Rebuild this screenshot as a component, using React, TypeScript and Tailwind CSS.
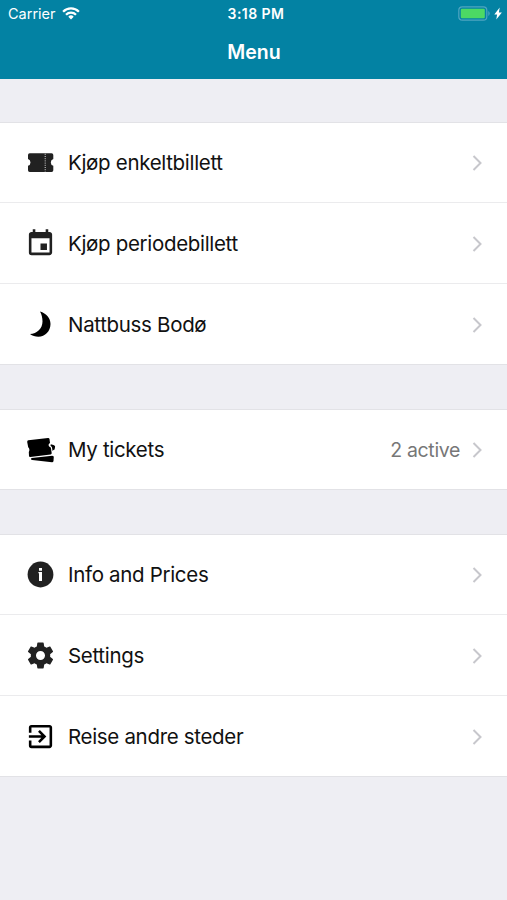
import type { ReactNode } from 'react';
import { MdEvent, MdExitToApp } from 'react-icons/md';

type MenuItem = {
  id: string;
  label: string;
  icon: ReactNode;
  detail?: string;
};

function TicketIcon() {
  return (
    <svg width="31" height="31" viewBox="0 0 31 31">
      <path
        d="M4.700 6.200h21.900a1.700 1.700 0 0 1 1.700 1.700v4.200a3.500 3.500 0 0 0 0 6.700v4.400a1.700 1.700 0 0 1-1.700 1.700H4.700A1.700 1.700 0 0 1 3 23.200v-4.400a3.500 3.500 0 0 0 0-6.700V7.900a1.700 1.700 0 0 1 1.700-1.700z"
        fill="#212121"
      />
      <path d="M20.200 6.800v18" stroke="#ddd" strokeWidth="1" strokeDasharray="1 1.200" />
    </svg>
  );
}

function MoonIcon() {
  return (
    <svg width="31" height="31" viewBox="0 0 31 31" fill="#000">
      <path d="M15 2.600c6.400 1.800 10.500 6.600 10.500 12.500 0 7.200-5.400 12.700-12.100 12.700-3.200 0-6-.9-8.400-2.700 6.900-.3 12.500-5.300 12.500-12.500 0-3.600-.8-7.100-2.500-10z" />
    </svg>
  );
}

function TicketsIcon() {
  return (
    <svg width="31" height="31" viewBox="0 0 31 31" fill="#000">
      <path d="M3.300 6.300 23 4q1.300-.1 1.500 1.100l.5 4c-2 .8-1.800 3.600.8 4.500l.9 5.500q.1 1.300-1.100 1.400L5.300 22.900q-1.200.1-1.300-1l-.2-3.900c1-1.300.8-3.600-.6-4.700l-1-5.400q-.1-1.400 1.100-1.600z" />
      <path d="m25.800 10.300 2.700.6q1.700.5 1.600 1.600l-.5 3q-1.300.1-2 1.600l-.7-4.100-1.400-1.200zM6.600 23.900 27.300 21.800l1.500.8-.3 4.300q-.2 1.300-1.500 1.300L7.200 26.100q-1.200-.2-1.200-1.100.1-.9.600-1.100z" />
    </svg>
  );
}

function InfoIcon() {
  return (
    <svg width="31" height="31" viewBox="0 0 31 31">
      <circle cx="15.500" cy="15.500" r="12.900" fill="#212121" />
      <path d="M14 9h3v2.800h-3zM13.400 12.900H17v9h-3v-7.600h-.6z" fill="#fff" />
    </svg>
  );
}

function GearIcon() {
  return (
    <svg width="31" height="31" viewBox="0 0 24 24" fill="#212121">
      <path d="M19.430 12.980c.04-.32.07-.64.07-.98s-.03-.66-.07-.98l2.110-1.650c.19-.15.24-.42.12-.64l-2-3.460c-.12-.22-.39-.3-.61-.22l-2.490 1c-.52-.4-1.080-.73-1.690-.98l-.38-2.650C14.460 2.180 14.250 2 14 2h-4c-.25 0-.46.18-.49.42l-.38 2.650c-.61.25-1.170.59-1.690.98l-2.490-1c-.23-.09-.49 0-.61.22l-2 3.460c-.13.22-.07.49.12.64l2.110 1.650c-.04.32-.07.65-.07.98s.03.66.07.98l-2.110 1.650c-.19.15-.24.42-.12.64l2 3.460c.12.22.39.3.61.22l2.490-1c.52.4 1.080.73 1.690.98l.38 2.650c.03.24.24.42.49.42h4c.25 0 .46-.18.49-.42l.38-2.650c.61-.25 1.170-.59 1.690-.98l2.490 1c.23.09.49 0 .61-.22l2-3.460c.12-.22.07-.49-.12-.64l-2.110-1.650zM12 15.500c-1.930 0-3.500-1.570-3.500-3.500s1.570-3.500 3.500-3.500 3.500 1.570 3.500 3.500-1.570 3.500-3.500 3.500z" />
    </svg>
  );
}

const sections: MenuItem[][] = [
  [
    { id: 'single', label: 'Kjøp enkeltbillett', icon: <TicketIcon /> },
    { id: 'period', label: 'Kjøp periodebillett', icon: <MdEvent size={31} /> },
    { id: 'night', label: 'Nattbuss Bodø', icon: <MoonIcon /> },
  ],
  [{ id: 'tickets', label: 'My tickets', icon: <TicketsIcon />, detail: '2 active' }],
  [
    { id: 'info', label: 'Info and Prices', icon: <InfoIcon /> },
    { id: 'settings', label: 'Settings', icon: <GearIcon /> },
    { id: 'travel', label: 'Reise andre steder', icon: <MdExitToApp size={31} color="#000" /> },
  ],
];

function StatusBar() {
  return (
    <div className="grid h-[27px] grid-cols-3 items-center pr-[5px] pl-2">
      <div className="flex items-center gap-1.5 text-[14.500px]">
        <span>Carrier</span>
        <svg width="18" height="13" viewBox="0 0 18 13" fill="none" stroke="white" strokeWidth="2.300">
          <path d="M1.100 4.700a11.200 11.200 0 0 1 15.800 0M4 7.700a7.100 7.100 0 0 1 10 0" />
          <path d="M9 12.400 6.300 9.700a3.800 3.800 0 0 1 5.400 0z" fill="white" stroke="none" />
        </svg>
      </div>
      <span className="pl-0.5 text-center text-[14px] font-semibold tracking-[0.45px]">3:18 PM</span>
      <div className="flex items-center justify-end gap-1">
        <svg width="32" height="15" viewBox="0 0 32 15">
          <rect x="0.800" y="0.800" width="28" height="13.400" rx="3.500" fill="none" stroke="#4fa5c1" strokeWidth="1.200" />
          <rect x="2.800" y="2.800" width="24" height="9.400" rx="1.200" fill="#4cd964" />
          <path d="M30.300 5v5q1.400-.8 1.400-2.500t-1.400-2.500z" fill="#4fa5c1" />
        </svg>
        <svg width="8" height="13" viewBox="0 0 8 13" fill="white">
          <path d="M5.700.5.300 7.400h2.800l-.8 5.100L7.900 5.400H4.900z" />
        </svg>
      </div>
    </div>
  );
}

function MenuRow({ item }: { item: MenuItem }) {
  return (
    <button className="flex h-[81px] w-full items-center border-b border-[#ebebed] pr-[25px] pl-[25px] text-left first:h-20 last:border-[#e2e2e6]">
      <span className="flex w-[43px] shrink-0 text-[#212121]">{item.icon}</span>
      <span className="flex-1 pt-0.5 text-[20.500px] tracking-[-0.32px] text-[#111]">{item.label}</span>
      {item.detail && (
        <span className="mr-3 pt-0.5 text-[19.500px] tracking-[-0.35px] text-[#777]">{item.detail}</span>
      )}
      <svg className="mt-px" width="10" height="16" viewBox="0 0 10 16" fill="none" stroke="#c7c7cc" strokeWidth="2">
        <path d="m1.500 1 7 7-7 7" />
      </svg>
    </button>
  );
}

export default function App() {
  return (
    <div className="min-h-screen bg-[#eeeef3] font-['Inter','Liberation_Sans',sans-serif]">
      <header className="h-[79px] bg-[#0382a3] text-white">
        <StatusBar />
        <h1 className="pt-[9px] pl-px text-center text-[19.500px] leading-8 font-semibold">Menu</h1>
      </header>

      <main className="flex flex-col gap-11 pt-[43px]">
        {sections.map((items) => (
          <section key={items[0].id} className="border-t border-[#e2e2e6] bg-white">
            {items.map((item) => (
              <MenuRow key={item.id} item={item} />
            ))}
          </section>
        ))}
      </main>
    </div>
  );
}
